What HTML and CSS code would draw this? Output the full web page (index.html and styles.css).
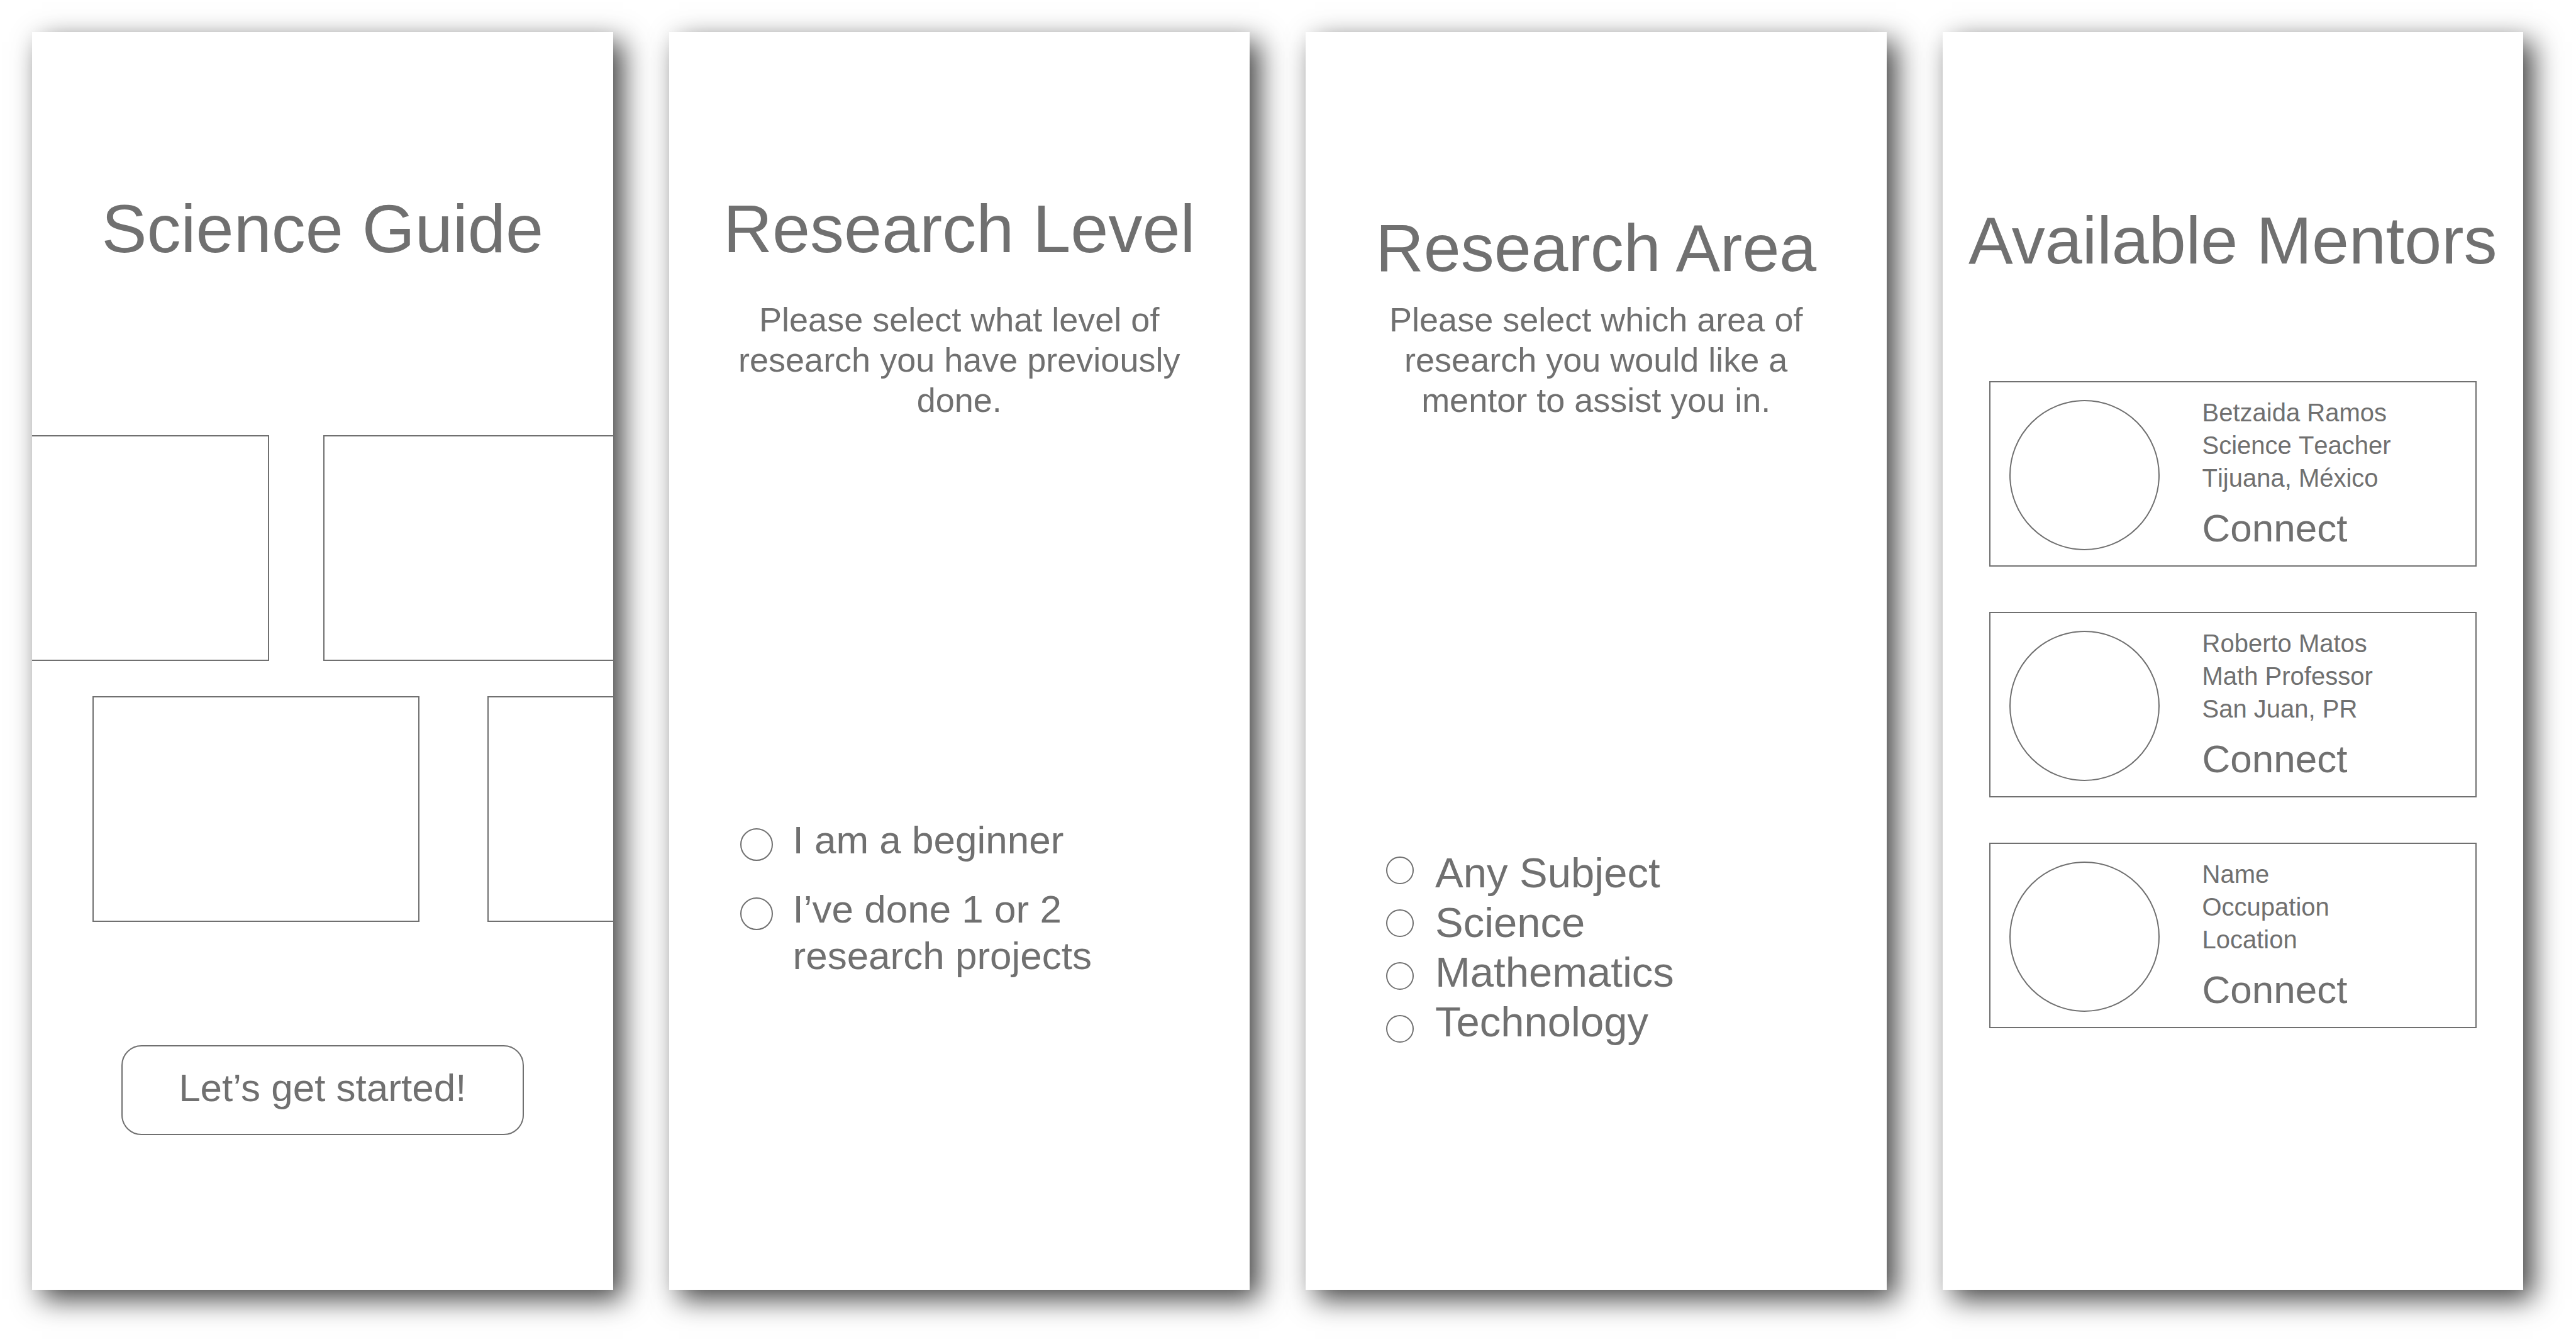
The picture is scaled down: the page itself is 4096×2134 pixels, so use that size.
FILE: index.html
```html
<!DOCTYPE html>
<html lang="en">
<head>
  <meta charset="utf-8">
  <meta name="viewport" content="width=device-width, initial-scale=1">
  <title>Science Guide</title>
  <link rel="stylesheet" href="styles.css">
</head>
<body>
  <main class="board">
    <section class="screen screen-start">
      <h1 class="title">Science Guide</h1>
      <div class="gallery">
        <div class="gallery-row gallery-row-first">
          <div class="tile"></div>
          <div class="tile"></div>
        </div>
        <div class="gallery-row gallery-row-second">
          <div class="tile"></div>
          <div class="tile"></div>
        </div>
      </div>
      <button class="start-button" type="button">Let’s get started!</button>
    </section>

    <section class="screen screen-level">
      <h1 class="title">Research Level</h1>
      <p class="lead">Please select what level of research you have previously done.</p>
      <form class="levels">
        <label class="level">
          <input class="radio radio-large" type="radio" name="level">
          <span>I am a beginner</span>
        </label>
        <label class="level">
          <input class="radio radio-large" type="radio" name="level">
          <span>I’ve done 1 or 2<br>research projects</span>
        </label>
      </form>
    </section>

    <section class="screen screen-area">
      <h1 class="title title-compact">Research Area</h1>
      <p class="lead">Please select which area of research you would like a mentor to assist you in.</p>
      <form class="areas">
        <div class="area-radios">
          <input class="radio" type="radio" name="area" id="area-any">
          <input class="radio" type="radio" name="area" id="area-science">
          <input class="radio" type="radio" name="area" id="area-math">
          <input class="radio" type="radio" name="area" id="area-tech">
        </div>
        <div class="area-labels">
          <label for="area-any">Any Subject</label>
          <label for="area-science">Science</label>
          <label for="area-math">Mathematics</label>
          <label for="area-tech">Technology</label>
        </div>
      </form>
    </section>

    <section class="screen screen-mentors">
      <h1 class="title title-compact">Available Mentors</h1>
      <div class="mentors">
        <article class="mentor">
          <div class="avatar"></div>
          <div class="mentor-info">
            <p>Betzaida Ramos</p>
            <p>Science Teacher</p>
            <p>Tijuana, México</p>
            <button class="connect" type="button">Connect</button>
          </div>
        </article>
        <article class="mentor">
          <div class="avatar"></div>
          <div class="mentor-info">
            <p>Roberto Matos</p>
            <p>Math Professor</p>
            <p>San Juan, PR</p>
            <button class="connect" type="button">Connect</button>
          </div>
        </article>
        <article class="mentor">
          <div class="avatar"></div>
          <div class="mentor-info">
            <p>Name</p>
            <p>Occupation</p>
            <p>Location</p>
            <button class="connect" type="button">Connect</button>
          </div>
        </article>
      </div>
    </section>
  </main>
</body>
</html>
```
FILE: styles.css
```css
:root {
  --ink: #707070;
  --line: 2px solid var(--ink);
}

* {
  box-sizing: border-box;
}

body {
  margin: 0;
  background: #fff;
  color: var(--ink);
  font-family: "Liberation Sans", Arial, Helvetica, sans-serif;
}

h1,
p {
  margin: 0;
  font-weight: 400;
}

button {
  color: inherit;
  font-family: inherit;
  font-size: 62px;
  cursor: pointer;
}

.board {
  display: grid;
  grid-template-columns: repeat(4, minmax(0, 1fr));
  gap: 89px;
  min-height: 100vh;
  padding: 51px 84px 83px 51px;
}

.screen {
  display: flex;
  flex-direction: column;
  background: #fff;
  box-shadow: 15px 15px 42px rgba(0, 0, 0, 0.75);
}

.screen-start,
.screen-level {
  padding-top: 253px;
}

.screen-area {
  padding-top: 283px;
}

.screen-mentors {
  padding-top: 271px;
}

.title {
  font-size: 108px;
  line-height: 120px;
  text-align: center;
  white-space: nowrap;
}

.title-compact {
  font-size: 106px;
}

.lead {
  padding: 0 100px;
  font-size: 54px;
  line-height: 64px;
  text-align: center;
}

.screen-level .lead {
  margin-top: 52px;
}

.screen-area .lead {
  margin-top: 22px;
}

/* Picture placeholders, cut off by the edges of the screen */
.gallery {
  display: flex;
  flex-direction: column;
  gap: 56px;
  margin-top: 268px;
  overflow: hidden;
}

.gallery-row {
  display: flex;
}

.gallery-row-first {
  gap: 86px;
  margin-left: -143px;
}

.gallery-row-second {
  gap: 108px;
  margin-left: 96px;
}

.tile {
  flex: none;
  width: 520px;
  height: 359px;
  border: var(--line);
}

.start-button {
  align-self: center;
  width: 640px;
  height: 143px;
  margin-top: 196px;
  padding: 0 0 8px;
  border: var(--line);
  border-radius: 32px;
  background: none;
}

/* Radio lists */
.radio {
  appearance: none;
  flex: none;
  width: 44px;
  height: 44px;
  margin: 0;
  border: var(--line);
  border-radius: 50%;
}

.radio:checked {
  background: radial-gradient(var(--ink) 45%, transparent 50%);
}

.radio-large {
  width: 52px;
  height: 52px;
  margin-top: 18px;
}

.levels {
  display: flex;
  flex-direction: column;
  gap: 36px;
  margin-top: 631px;
  padding-left: 113px;
  font-size: 62px;
  line-height: 74px;
}

.level {
  display: flex;
  align-items: flex-start;
  gap: 32px;
}

.areas {
  display: flex;
  gap: 34px;
  margin-top: 680px;
  padding-left: 128px;
}

.area-radios {
  display: flex;
  flex-direction: column;
  gap: 40px;
  padding-top: 14px;
}

.area-labels {
  display: flex;
  flex-direction: column;
  font-size: 67px;
  line-height: 79px;
}

/* Mentor cards */
.mentors {
  display: flex;
  flex-direction: column;
  gap: 72px;
  margin-top: 164px;
  padding: 0 74px;
}

.mentor {
  display: flex;
  gap: 68px;
  padding: 22px 30px;
  border: var(--line);
}

.avatar {
  flex: none;
  width: 239px;
  height: 239px;
  margin-top: 6px;
  border: var(--line);
  border-radius: 50%;
}

.mentor-info {
  display: flex;
  flex-direction: column;
  align-items: flex-start;
  font-size: 40px;
  line-height: 52px;
  font-kerning: none;
}

.connect {
  margin-top: 17px;
  padding: 0;
  border: 0;
  background: none;
  line-height: 74px;
}
```
